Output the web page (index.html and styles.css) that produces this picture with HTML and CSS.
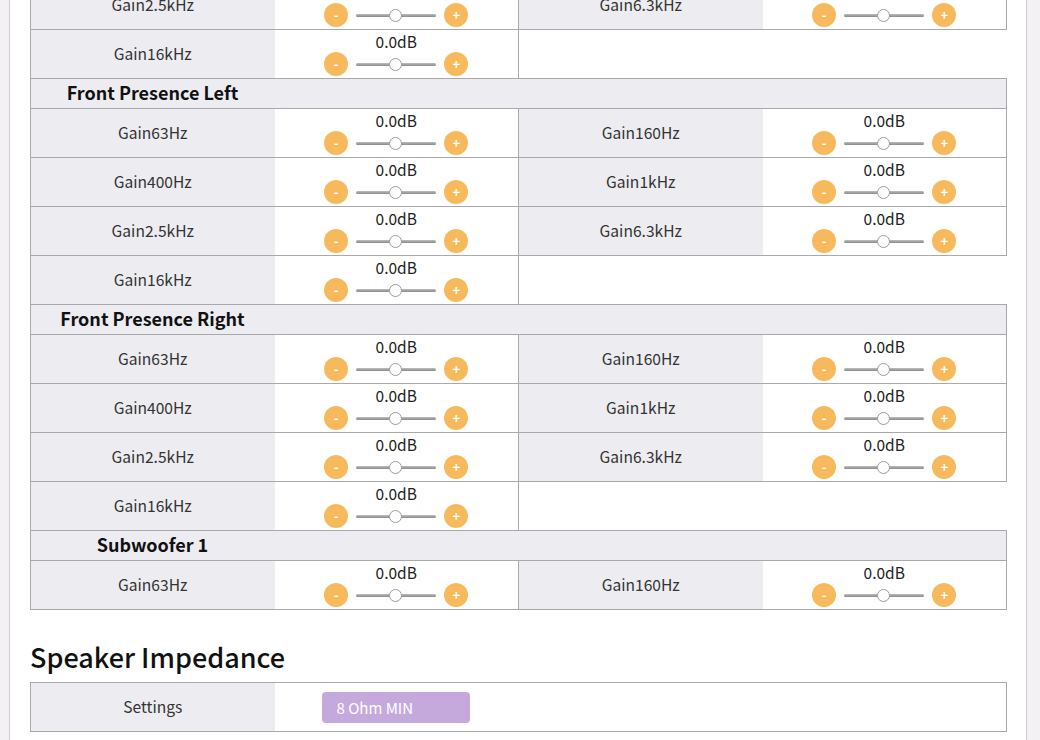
FILE: index.html
```html
<!DOCTYPE html>
<html lang="en">
<head>
<meta charset="utf-8">
<title>Equalizer</title>
<link rel="stylesheet" href="styles.css">
</head>
<body>
<div class="page">
  <table class="grid first">
    <colgroup><col class="c"><col class="c"><col class="c"><col class="c"></colgroup>
    <tr class="row">
      <td class="label">Gain2.5kHz</td>
      <td class="value"><div class="ctl"><div class="db">0.0dB</div><div class="slide"><span class="btn">-</span><span class="track"><span class="thumb"></span></span><span class="btn">+</span></div></div></td>
      <td class="label">Gain6.3kHz</td>
      <td class="value"><div class="ctl"><div class="db">0.0dB</div><div class="slide"><span class="btn">-</span><span class="track"><span class="thumb"></span></span><span class="btn">+</span></div></div></td>
    </tr>
    <tr class="row">
      <td class="label">Gain16kHz</td>
      <td class="value"><div class="ctl"><div class="db">0.0dB</div><div class="slide"><span class="btn">-</span><span class="track"><span class="thumb"></span></span><span class="btn">+</span></div></div></td>
    </tr>
    <tr class="head"><td colspan="4"><span class="htext">Front Presence Left</span></td></tr>
    <tr class="row">
      <td class="label">Gain63Hz</td>
      <td class="value"><div class="ctl"><div class="db">0.0dB</div><div class="slide"><span class="btn">-</span><span class="track"><span class="thumb"></span></span><span class="btn">+</span></div></div></td>
      <td class="label">Gain160Hz</td>
      <td class="value"><div class="ctl"><div class="db">0.0dB</div><div class="slide"><span class="btn">-</span><span class="track"><span class="thumb"></span></span><span class="btn">+</span></div></div></td>
    </tr>
    <tr class="row">
      <td class="label">Gain400Hz</td>
      <td class="value"><div class="ctl"><div class="db">0.0dB</div><div class="slide"><span class="btn">-</span><span class="track"><span class="thumb"></span></span><span class="btn">+</span></div></div></td>
      <td class="label">Gain1kHz</td>
      <td class="value"><div class="ctl"><div class="db">0.0dB</div><div class="slide"><span class="btn">-</span><span class="track"><span class="thumb"></span></span><span class="btn">+</span></div></div></td>
    </tr>
    <tr class="row">
      <td class="label">Gain2.5kHz</td>
      <td class="value"><div class="ctl"><div class="db">0.0dB</div><div class="slide"><span class="btn">-</span><span class="track"><span class="thumb"></span></span><span class="btn">+</span></div></div></td>
      <td class="label">Gain6.3kHz</td>
      <td class="value"><div class="ctl"><div class="db">0.0dB</div><div class="slide"><span class="btn">-</span><span class="track"><span class="thumb"></span></span><span class="btn">+</span></div></div></td>
    </tr>
    <tr class="row">
      <td class="label">Gain16kHz</td>
      <td class="value"><div class="ctl"><div class="db">0.0dB</div><div class="slide"><span class="btn">-</span><span class="track"><span class="thumb"></span></span><span class="btn">+</span></div></div></td>
    </tr>
    <tr class="head"><td colspan="4"><span class="htext">Front Presence Right</span></td></tr>
    <tr class="row">
      <td class="label">Gain63Hz</td>
      <td class="value"><div class="ctl"><div class="db">0.0dB</div><div class="slide"><span class="btn">-</span><span class="track"><span class="thumb"></span></span><span class="btn">+</span></div></div></td>
      <td class="label">Gain160Hz</td>
      <td class="value"><div class="ctl"><div class="db">0.0dB</div><div class="slide"><span class="btn">-</span><span class="track"><span class="thumb"></span></span><span class="btn">+</span></div></div></td>
    </tr>
    <tr class="row">
      <td class="label">Gain400Hz</td>
      <td class="value"><div class="ctl"><div class="db">0.0dB</div><div class="slide"><span class="btn">-</span><span class="track"><span class="thumb"></span></span><span class="btn">+</span></div></div></td>
      <td class="label">Gain1kHz</td>
      <td class="value"><div class="ctl"><div class="db">0.0dB</div><div class="slide"><span class="btn">-</span><span class="track"><span class="thumb"></span></span><span class="btn">+</span></div></div></td>
    </tr>
    <tr class="row">
      <td class="label">Gain2.5kHz</td>
      <td class="value"><div class="ctl"><div class="db">0.0dB</div><div class="slide"><span class="btn">-</span><span class="track"><span class="thumb"></span></span><span class="btn">+</span></div></div></td>
      <td class="label">Gain6.3kHz</td>
      <td class="value"><div class="ctl"><div class="db">0.0dB</div><div class="slide"><span class="btn">-</span><span class="track"><span class="thumb"></span></span><span class="btn">+</span></div></div></td>
    </tr>
    <tr class="row">
      <td class="label">Gain16kHz</td>
      <td class="value"><div class="ctl"><div class="db">0.0dB</div><div class="slide"><span class="btn">-</span><span class="track"><span class="thumb"></span></span><span class="btn">+</span></div></div></td>
    </tr>
    <tr class="head"><td colspan="4"><span class="htext">Subwoofer 1</span></td></tr>
    <tr class="row">
      <td class="label">Gain63Hz</td>
      <td class="value"><div class="ctl"><div class="db">0.0dB</div><div class="slide"><span class="btn">-</span><span class="track"><span class="thumb"></span></span><span class="btn">+</span></div></div></td>
      <td class="label">Gain160Hz</td>
      <td class="value"><div class="ctl"><div class="db">0.0dB</div><div class="slide"><span class="btn">-</span><span class="track"><span class="thumb"></span></span><span class="btn">+</span></div></div></td>
    </tr>
  </table>

  <h2 class="section">Speaker Impedance</h2>
  <table class="grid">
    <colgroup><col class="c"><col class="c"><col class="c"><col class="c"></colgroup>
    <tr class="row">
      <td class="label">Settings</td>
      <td class="value wide" colspan="3"><button class="select">8 Ohm MIN</button></td>
    </tr>
  </table>
</div>
</body>
</html>
```

FILE: styles.css
```css
html, body {
  margin: 0;
  padding: 0;
}
body {
  background: #f4f1f5;
  font-family: "Noto Sans CJK JP", "Noto Sans", sans-serif;
  color: #222;
  overflow: hidden;
}
.page {
  margin: 0 13px 0 9px;
  background: #fff;
  border-left: 1px solid #cfcfd3;
  border-right: 1px solid #cfcfd3;
  padding: 0 20px 40px 20px;
  min-height: 800px;
}
.grid {
  width: 975px;
  border-collapse: collapse;
  table-layout: fixed;
}
.grid .c {
  width: 244px;
}
.grid.first {
  margin-top: -20px;
}
.grid td {
  border: 1px solid #a9a9ad;
  padding: 0;
}
.grid td.label {
  border-right: none;
  height: 45px;
  padding-bottom: 3px;
}
.grid td.value {
  border-left: none;
  height: 48px;
}
.label {
  background: #ededf1;
  text-align: center;
  font-size: 15.6px;
  color: #333;
  vertical-align: middle;
}
.value {
  background: #fff;
  vertical-align: top;
}
.ctl {
  display: flex;
  flex-direction: column;
  align-items: center;
}
.db {
  font-size: 15.5px;
  line-height: 18px;
  margin-top: 2px;
  color: #222;
}
.slide {
  display: flex;
  align-items: center;
  gap: 8px;
  margin-top: 2px;
}
.btn {
  width: 24px;
  height: 24px;
  border-radius: 50%;
  background: #f6b95b;
  color: #fff;
  font-size: 13px;
  line-height: 24px;
  text-align: center;
  font-weight: bold;
}
.track {
  position: relative;
  width: 80px;
  height: 3px;
  border-radius: 2px;
  background: linear-gradient(#bdbdbd, #8a8a8a);
}
.thumb {
  position: absolute;
  left: 33px;
  top: -5px;
  width: 11px;
  height: 11px;
  border-radius: 50%;
  background: #fff;
  border: 1px solid #9c9c9c;
}
.grid .head td {
  height: 29px;
  background: #ededf1;
}
.htext {
  display: block;
  width: 243px;
  text-align: center;
  font-size: 18px;
  line-height: 22px;
  font-weight: bold;
  color: #111;
  padding-bottom: 3px;
}
.section {
  margin: 32px 0 10px 0;
  font-size: 27px;
  font-weight: 500;
  line-height: 30px;
  color: #111;
}
.grid td.wide {
  vertical-align: middle;
}
.select {
  margin-left: 47px;
  width: 148px;
  height: 31px;
  border: none;
  border-radius: 4px;
  background: #c5a9dd;
  color: #fff;
  font-family: inherit;
  font-size: 15px;
  text-align: left;
  padding: 0 15px;
  display: block;
}
```
